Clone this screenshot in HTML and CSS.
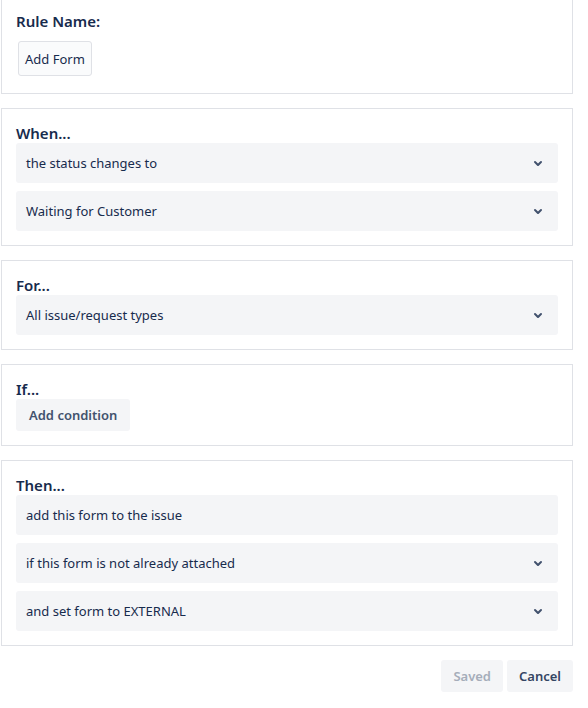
FILE: index.html
```html
<!DOCTYPE html>
<html lang="en">
<head>
    <meta charset="UTF-8">
    <meta name="viewport" content="width=device-width, initial-scale=1.0">
    <title>Rule editor</title>
    <link rel="stylesheet" href="styles.css">
</head>
<body>
    <div class="rule-editor">
        <div class="card card-name">
            <div class="card-title">Rule Name:</div>
            <div class="name-row">
                <button class="name-button">Add Form</button>
            </div>
        </div>

        <div class="card">
            <div class="card-title">When...</div>
            <div class="select-list">
                <div class="select">
                    <span>the status changes to</span>
                    <svg class="chevron" viewBox="0 0 24 24"><path d="M8.292 10.293a1.009 1.009 0 000 1.419l2.939 2.965c.218.215.5.322.779.322s.556-.107.769-.322l2.93-2.955a1.01 1.01 0 000-1.419.987.987 0 00-1.406 0l-2.298 2.317-2.307-2.327a.99.99 0 00-1.406 0z"/></svg>
                </div>
                <div class="select">
                    <span>Waiting for Customer</span>
                    <svg class="chevron" viewBox="0 0 24 24"><path d="M8.292 10.293a1.009 1.009 0 000 1.419l2.939 2.965c.218.215.5.322.779.322s.556-.107.769-.322l2.93-2.955a1.01 1.01 0 000-1.419.987.987 0 00-1.406 0l-2.298 2.317-2.307-2.327a.99.99 0 00-1.406 0z"/></svg>
                </div>
            </div>
        </div>

        <div class="card">
            <div class="card-title">For...</div>
            <div class="select-list">
                <div class="select">
                    <span>All issue/request types</span>
                    <svg class="chevron" viewBox="0 0 24 24"><path d="M8.292 10.293a1.009 1.009 0 000 1.419l2.939 2.965c.218.215.5.322.779.322s.556-.107.769-.322l2.93-2.955a1.01 1.01 0 000-1.419.987.987 0 00-1.406 0l-2.298 2.317-2.307-2.327a.99.99 0 00-1.406 0z"/></svg>
                </div>
            </div>
        </div>

        <div class="card">
            <div class="card-title">If...</div>
            <div>
                <button class="button">Add condition</button>
            </div>
        </div>

        <div class="card">
            <div class="card-title">Then...</div>
            <div class="select-list">
                <div class="select">
                    <span>add this form to the issue</span>
                </div>
                <div class="select">
                    <span>if this form is not already attached</span>
                    <svg class="chevron" viewBox="0 0 24 24"><path d="M8.292 10.293a1.009 1.009 0 000 1.419l2.939 2.965c.218.215.5.322.779.322s.556-.107.769-.322l2.93-2.955a1.01 1.01 0 000-1.419.987.987 0 00-1.406 0l-2.298 2.317-2.307-2.327a.99.99 0 00-1.406 0z"/></svg>
                </div>
                <div class="select">
                    <span>and set form to EXTERNAL</span>
                    <svg class="chevron" viewBox="0 0 24 24"><path d="M8.292 10.293a1.009 1.009 0 000 1.419l2.939 2.965c.218.215.5.322.779.322s.556-.107.769-.322l2.93-2.955a1.01 1.01 0 000-1.419.987.987 0 00-1.406 0l-2.298 2.317-2.307-2.327a.99.99 0 00-1.406 0z"/></svg>
                </div>
            </div>
        </div>

        <div class="footer">
            <button class="button button-disabled" disabled>Saved</button>
            <button class="button button-cancel">Cancel</button>
        </div>
    </div>
</body>
</html>
```

FILE: styles.css
```css
body {
    margin: 0;
    font-family: "Noto Sans", "Open Sans", sans-serif;
    font-size: 13px;
    color: #172b4d;
    background: #fff;
}
.rule-editor {
    width: 572px;
    margin: -4px 0 0 1px;
}
.card {
    border: 1px solid #dfe1e6;
    padding: 14px;
    margin-bottom: 14px;
}
.card-title {
    font-size: 15px;
    font-weight: 600;
    line-height: 20px;
    color: #172b4d;
}
.name-row {
    padding: 8px 0 1px;
}
.name-button {
    height: 35px;
    margin: 2px;
    padding: 0 6px;
    border: 1px solid #dfe1e6;
    border-radius: 3px;
    background: #fafbfc;
    font-family: inherit;
    font-size: 13px;
    color: #172b4d;
}
.select-list {
    display: flex;
    flex-direction: column;
    gap: 8px;
}
.select {
    display: flex;
    align-items: center;
    justify-content: space-between;
    height: 40px;
    padding: 0 8px 0 10px;
    border-radius: 3px;
    background: #f4f5f7;
}
.chevron {
    width: 24px;
    height: 24px;
    fill: #42526e;
}
.button {
    height: 32px;
    padding: 0 12px;
    border: none;
    border-radius: 3px;
    background: #f4f5f7;
    font-family: inherit;
    font-size: 13px;
    font-weight: 600;
    color: #42526e;
}
.card .button {
    padding: 0 13px;
}
.button-disabled {
    color: #a5adba;
}
.button-cancel {
    color: #344563;
}
.footer {
    display: flex;
    justify-content: flex-end;
    gap: 4px;
}
```
